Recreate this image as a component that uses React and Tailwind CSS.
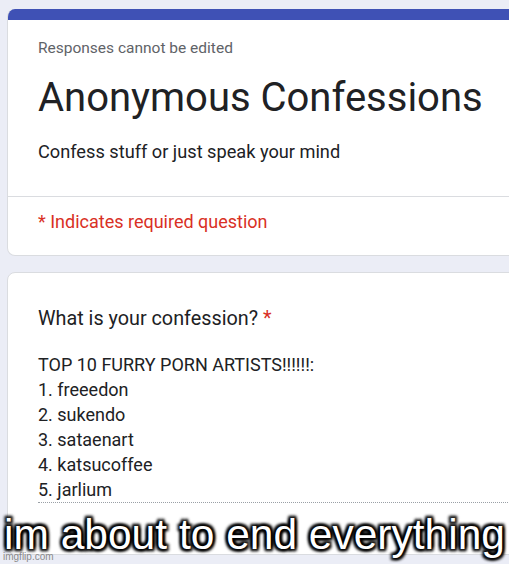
export default function App() {
  const lines = [
    'TOP 10 FURRY PORN ARTISTS!!!!!!:',
    '1. freeedon',
    '2. sukendo',
    '3. sataenart',
    '4. katsucoffee',
    '5. jarlium',
  ];

  return (
    <div className="relative w-[509px] h-[564px] overflow-hidden bg-[#ebedf6] pl-[7px] pt-[9px] font-['Roboto',sans-serif]">
      {/* header card */}
      <div className="mr-[-12px] rounded-lg bg-white border border-[#dadce0] border-t-0 overflow-hidden">
        <div className="h-[11px] bg-[#3f51b5]" />
        <div className="pl-[30px] pt-[18px] pb-[32px] border-b border-[#dadce0]">
          <div className="text-[15.5px] leading-[20px] text-[#5f6368]">Responses cannot be edited</div>
          <h1 className="mt-[16px] text-[40px] leading-[48px] text-[#202124]">Anonymous Confessions</h1>
          <p className="mt-[18px] text-[18.2px] leading-[24px] text-[#202124]">Confess stuff or just speak your mind</p>
        </div>
        <div className="pl-[30px] pt-[13px] pb-[21px] text-[18px] leading-[24px] text-[#d93025]">
          * Indicates required question
        </div>
      </div>

      {/* question card */}
      <div className="mt-[16px] mr-[-12px] h-[283px] rounded-lg bg-white border border-[#dadce0] pl-[30px] pt-[34px]">
        <div className="text-[19.8px] leading-[24px] text-[#202124]">
          What is your confession? <span className="text-[#d93025]">*</span>
        </div>
        <div className="mt-[21px] border-b border-dotted border-[#9aa0a6] text-[18px] leading-[25px] text-[#202124]">
          {lines.map((l) => (
            <div key={l}>{l}</div>
          ))}
        </div>
      </div>

      {/* meme caption */}
      <div className="absolute left-0 right-0 top-[511px] text-center text-[42.5px] leading-[48px] text-white font-['Liberation_Sans',sans-serif] [text-shadow:0_0_4px_#000,0_0_4px_#000,0_0_3px_#000,2px_2px_3px_#000,-2px_-2px_3px_#000,2px_-2px_3px_#000,-2px_2px_3px_#000]">
        im about to end everything
      </div>
      <div className="absolute left-[3px] bottom-[1px] text-[10px] leading-[12px] text-[#8a8a8a] font-['Liberation_Sans',sans-serif]">
        imgflip.com
      </div>
    </div>
  );
}
